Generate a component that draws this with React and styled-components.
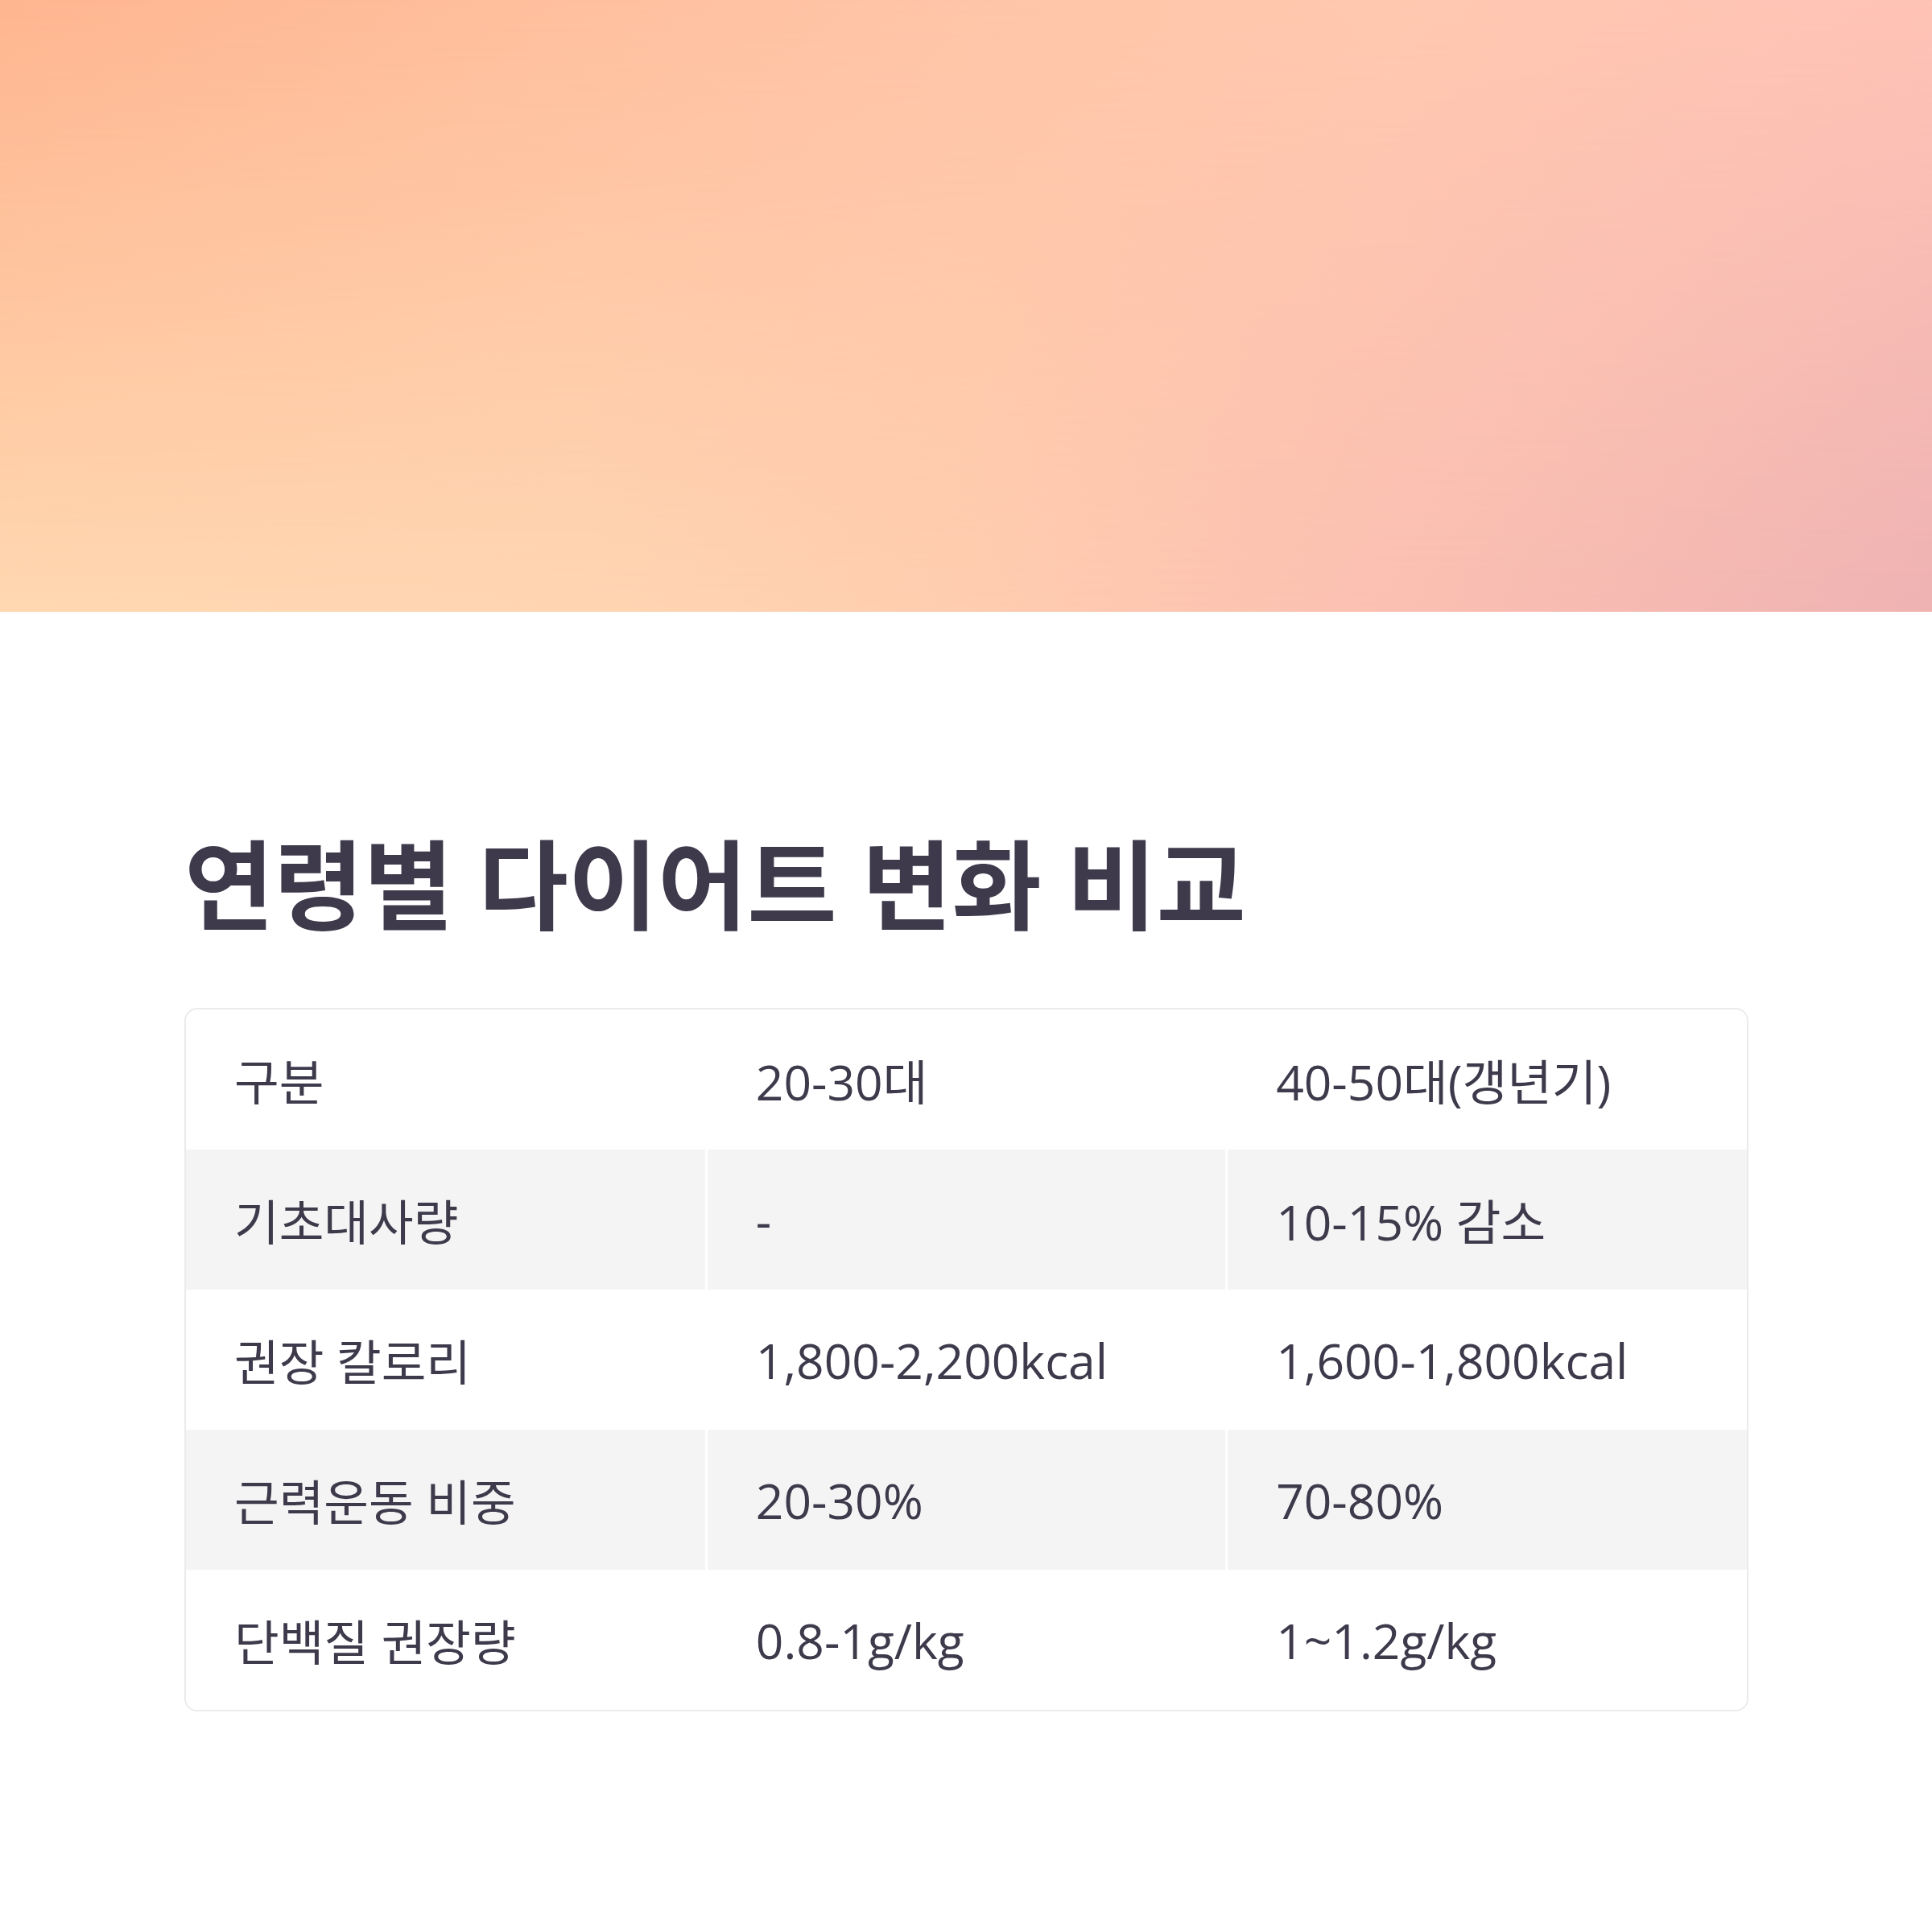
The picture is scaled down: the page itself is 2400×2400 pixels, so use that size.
import React from "react";
import styled, { createGlobalStyle } from "styled-components";

const GlobalStyle = createGlobalStyle`
  html, body {
    margin: 0;
    padding: 0;
    background: #ffffff;
  }
  body {
    font-family: "Open Sans", "Noto Sans CJK KR", sans-serif;
    color: #3e3a4c;
  }
`;

const rows = [
  ["기초대사량", "-", "10-15% 감소"],
  ["권장 칼로리", "1,800-2,200kcal", "1,600-1,800kcal"],
  ["근력운동 비중", "20-30%", "70-80%"],
  ["단백질 권장량", "0.8-1g/kg", "1~1.2g/kg"],
];

export default function App() {
  return (
    <>
      <GlobalStyle />
      <Page>
        <Hero />
        <Content>
          <Title>연령별 다이어트 변화 비교</Title>
          <TableCard>
            <Table>
              <thead>
                <tr>
                  <Cell as="th">구분</Cell>
                  <Cell as="th">20-30대</Cell>
                  <Cell as="th">40-50대(갱년기)</Cell>
                </tr>
              </thead>
              <tbody>
                {rows.map((row, i) => (
                  <Row key={row[0]} $shaded={i % 2 === 0}>
                    {row.map((text, j) => (
                      <Cell key={j}>{text}</Cell>
                    ))}
                  </Row>
                ))}
              </tbody>
            </Table>
          </TableCard>
        </Content>
      </Page>
    </>
  );
}

const Page = styled.div`
  width: 2400px;
  min-height: 2400px;
  background: #ffffff;
`;

const Hero = styled.div`
  position: relative;
  height: 760px;
  background: linear-gradient(
    to right,
    #ffd8b1 0%,
    #ffd6b2 30%,
    #ffcdb0 50%,
    #fbc0b2 72%,
    #efb3b3 100%
  );
  overflow: hidden;
  &::before {
    content: "";
    position: absolute;
    inset: 0;
    background: linear-gradient(
      to right,
      #feb590 0%,
      #ffbf9e 30%,
      #ffc5a7 50%,
      #ffc8af 72%,
      #ffc3b6 100%
    );
    -webkit-mask-image: linear-gradient(to bottom, #000 0%, rgba(0, 0, 0, 0) 100%);
    mask-image: linear-gradient(to bottom, #000 0%, rgba(0, 0, 0, 0) 100%);
  }
`;

const Content = styled.div`
  padding: 266px 228px 0 229px;
`;

const Title = styled.h1`
  margin: 0 0 81px;
  font-family: "Open Sans", "Noto Sans CJK KR", sans-serif;
  font-size: 121px;
  font-weight: 700;
  line-height: 1.2;
  letter-spacing: 0;
  color: #3e3a4c;
`;

const TableCard = styled.div`
  border: 2px solid #ebebeb;
  border-radius: 16px;
  overflow: hidden;
  background: #ffffff;
`;

const Table = styled.table`
  width: 100%;
  border-collapse: collapse;
  table-layout: fixed;
`;

const Row = styled.tr`
  background: ${(p) => (p.$shaded ? "#f4f4f4" : "#ffffff")};
`;

const Cell = styled.td`
  height: 174px;
  box-sizing: border-box;
  padding: 0 60px;
  text-align: left;
  vertical-align: middle;
  font-size: 60.5px;
  font-weight: 400;
  color: #3e3a4c;
  border-left: 3px solid #ffffff;
  &:first-child {
    border-left: none;
  }
`;
